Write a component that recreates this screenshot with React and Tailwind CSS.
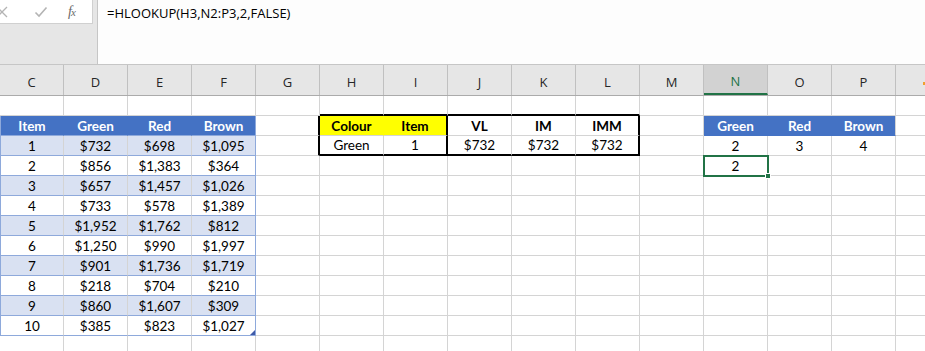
import React from 'react';

const COLS = ['C', 'D', 'E', 'F', 'G', 'H', 'I', 'J', 'K', 'L', 'M', 'N', 'O', 'P', 'Q'];

const items = [
  ['1', '$732', '$698', '$1,095'],
  ['2', '$856', '$1,383', '$364'],
  ['3', '$657', '$1,457', '$1,026'],
  ['4', '$733', '$578', '$1,389'],
  ['5', '$1,952', '$1,762', '$812'],
  ['6', '$1,250', '$990', '$1,997'],
  ['7', '$901', '$1,736', '$1,719'],
  ['8', '$218', '$704', '$210'],
  ['9', '$860', '$1,607', '$309'],
  ['10', '$385', '$823', '$1,027'],
];

// cell style lookup: returns { text, cls } for a given row (1-based) and column letter
const getCell = (row, col) => {
  const ci = COLS.indexOf(col);
  let text = '';
  let cls = 'border-r border-b border-r-[#d4d4d4] border-b-[#d4d4d4] bg-white text-black';

  // left table C2:F12
  if (ci <= 3 && row >= 2 && row <= 12) {
    const last = ci === 3;
    if (row === 2) {
      text = ['Item', 'Green', 'Red', 'Brown'][ci];
      cls = `bg-[#4472c4] text-white font-bold border-b border-b-[#8ea9db] border-r ${last ? 'border-r-[#8ea9db]' : 'border-r-[#4472c4]'}`;
    } else {
      const r = items[row - 3];
      text = r[ci];
      const light = (row - 3) % 2 === 0;
      cls = `${light ? 'bg-[#d9e1f2]' : 'bg-white'} text-black border-b border-b-[#8ea9db] border-r ${last ? 'border-r-[#8ea9db]' : 'border-r-[#d4d4d4]'}`;
    }
    if (ci === 0) cls += ' border-l border-l-[#8ea9db]';
  }

  // G2:G3 carry the left edge of the lookup box
  if (col === 'G' && (row === 2 || row === 3)) {
    cls = 'bg-white border-r-2 border-r-black border-b border-b-[#d4d4d4]';
  }
  // H1:L1 carry its top edge
  if (row === 1 && ci >= 5 && ci <= 9) {
    cls = 'bg-white border-b-2 border-b-black border-r border-r-[#d4d4d4]';
  }

  // lookup box H2:L3
  if (ci >= 5 && ci <= 9 && (row === 2 || row === 3)) {
    const sep = col === 'I' || col === 'L';
    if (row === 2) {
      text = { H: 'Colour', I: 'Item', J: 'VL', K: 'IM', L: 'IMM' }[col];
      const yellow = col === 'H' || col === 'I';
      cls = `font-bold text-black ${yellow ? 'bg-[#ffff00]' : 'bg-white'} border-b border-b-[#d4d4d4] ${
        sep ? 'border-r-2 border-r-black' : yellow ? 'border-r border-r-[#ffff00]' : 'border-r border-r-[#d4d4d4]'
      }`;
    } else {
      text = { H: 'Green', I: '1', J: '$732', K: '$732', L: '$732' }[col];
      cls = `bg-white text-black border-b-2 border-b-black ${sep ? 'border-r-2 border-r-black' : 'border-r border-r-[#d4d4d4]'}`;
    }
  }

  // right table N2:P3
  if (ci >= 11 && ci <= 13 && row === 2) {
    text = { N: 'Green', O: 'Red', P: 'Brown' }[col];
    cls = `bg-[#4472c4] text-white font-bold border-b border-b-[#4472c4] border-r ${col === 'P' ? 'border-r-[#d4d4d4]' : 'border-r-[#4472c4]'}`;
  }
  if (ci >= 11 && ci <= 13 && row === 3) {
    text = { N: '2', O: '3', P: '4' }[col];
  }
  if (col === 'N' && row === 4) text = '2';

  return { text, cls };
};

const Cell = ({ row, col }) => {
  const { text, cls } = getCell(row, col);
  const selected = row === 4 && col === 'N';
  const cornerMark = row === 12 && col === 'F';
  return (
    <div className={`relative w-16 h-5 shrink-0 box-border flex items-center justify-center pt-[2px] text-[13.5px] leading-none ${cls}`}>
      {text}
      {selected && (
        <div className="absolute z-10 -left-[1px] -top-[1px] w-[66px] h-[22px] border-2 border-[#217346]">
          <div className="absolute -right-[4px] -bottom-[4px] w-[6px] h-[6px] bg-[#217346] border border-white" />
        </div>
      )}
      {cornerMark && (
        <div className="absolute z-10 right-0 bottom-0 w-0 h-0 border-l-[5px] border-l-transparent border-b-[5px] border-b-[#3f5ba9]" />
      )}
    </div>
  );
};

const App = () => {
  const rows = Array.from({ length: 13 }, (_, i) => i + 1);

  return (
    <div className="w-[925px] h-[351px] overflow-hidden bg-white">
      {/* formula bar */}
      <div className="h-[65px] flex bg-[#e6e6e6] border-b border-[#c6c6c6]">
        <div className="w-[93px] h-[24px] bg-white border-b border-r border-[#d0d0d0] flex items-center text-[#a6a6a6]">
          <span className="w-[8px] overflow-hidden flex justify-end">
            <svg width="12" height="12" viewBox="0 0 12 12" className="shrink-0">
              <path d="M1 1 L11 11 M11 1 L1 11" stroke="#b4b4b4" strokeWidth="1.3" fill="none" />
            </svg>
          </span>
          <svg width="14" height="12" viewBox="0 0 14 12" className="ml-[26px]">
            <path d="M1.5 6.5 L5 10 L12.5 1.5" stroke="#b4b4b4" strokeWidth="1.6" fill="none" />
          </svg>
          <span className="ml-[20px] text-[#6a6a6a] italic text-[14px] font-['Liberation_Serif',serif] tracking-[-1px]">
            f<span className="text-[11px]">x</span>
          </span>
        </div>
        <div className="ml-[4px] flex-1 h-[64px] bg-[#fdfdfd] border-l border-[#c6c6c6] pl-[9px] pt-[4px] text-[13px] text-black font-['Open_Sans',sans-serif]">
          =HLOOKUP(H3,N2:P3,2,FALSE)
        </div>
      </div>

      {/* column headers */}
      <div className="flex h-[31px] bg-[#e6e6e6] border-b border-[#ababab] font-['Open_Sans',sans-serif] text-[13px] text-[#262626]">
        {COLS.map((c) => (
          <div
            key={c}
            className={`relative w-16 shrink-0 flex items-center justify-center pt-[6px] border-r border-[#c0c0c0] ${
              c === 'N' ? 'bg-[#d2d2d2] text-[#217346] border-b-2 border-b-[#217346]' : ''
            }`}
          >
            {c === 'Q' ? (
              <span className="absolute left-[27px] top-[17px] w-[2px] h-[3px] bg-[#f0a030]" />
            ) : (
              c
            )}
          </div>
        ))}
      </div>

      {/* sheet rows */}
      <div className="font-['Lato',sans-serif]">
        {rows.map((r) => (
          <div key={r} className="flex">
            {COLS.map((c) => (
              <Cell key={c} row={r} col={c} />
            ))}
          </div>
        ))}
      </div>
    </div>
  );
};

export default App;
